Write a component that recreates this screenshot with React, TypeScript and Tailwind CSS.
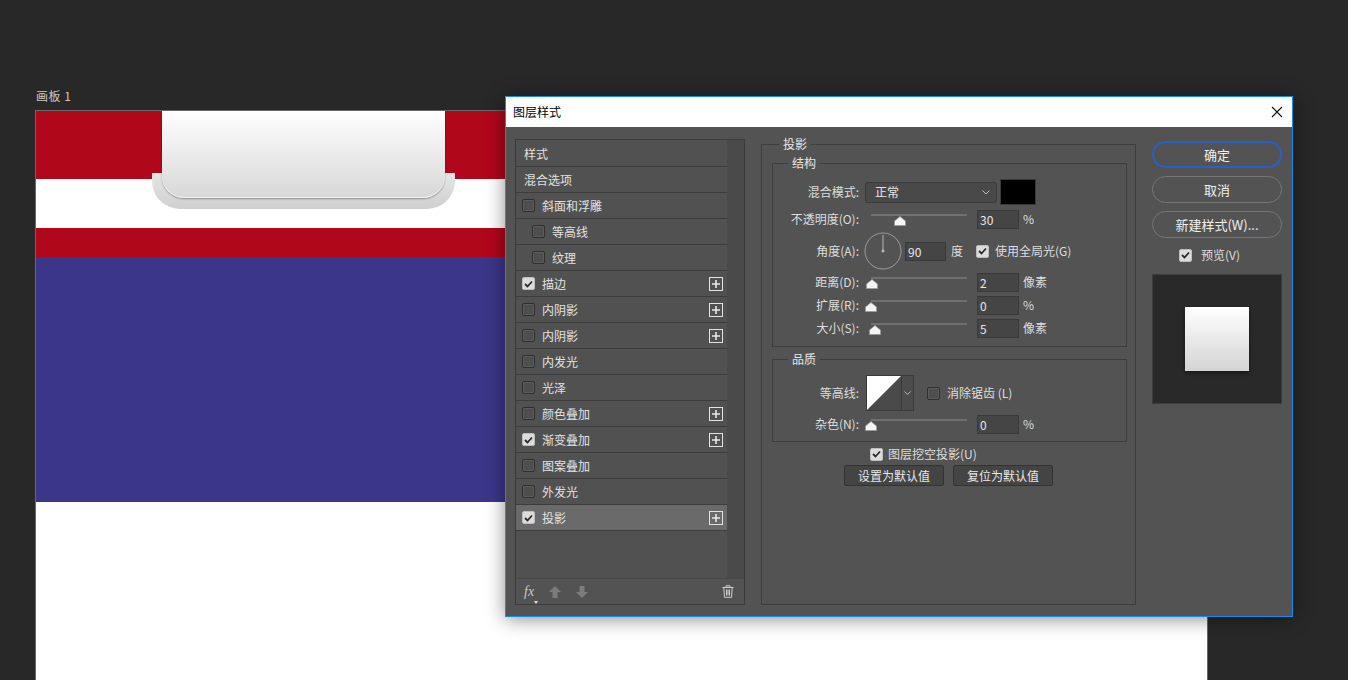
import React from 'react';

type Effect = {
    name: string;
    header?: boolean;
    indent?: boolean;
    checked?: boolean;
    plus?: boolean;
    active?: boolean;
};

const effects: Effect[] = [
    { name: '样式', header: true },
    { name: '混合选项', header: true },
    { name: '斜面和浮雕' },
    { name: '等高线', indent: true },
    { name: '纹理', indent: true },
    { name: '描边', checked: true, plus: true },
    { name: '内阴影', plus: true },
    { name: '内阴影', plus: true },
    { name: '内发光' },
    { name: '光泽' },
    { name: '颜色叠加', plus: true },
    { name: '渐变叠加', checked: true, plus: true },
    { name: '图案叠加' },
    { name: '外发光' },
    { name: '投影', checked: true, plus: true, active: true },
];

function Check({ checked }: { checked?: boolean }) {
    if (checked) {
        return (
            <span className="w-[13px] h-[13px] shrink-0 rounded-[2px] bg-[#dcdcdc] border border-[#bdbdbd] flex items-center justify-center">
                <svg width="9" height="8" viewBox="0 0 9 8">
                    <path d="M1 4 L3.5 6.5 L8 1.5" fill="none" stroke="#2a2a2a" strokeWidth="1.8" />
                </svg>
            </span>
        );
    }
    return <span className="block w-[13px] h-[13px] shrink-0 rounded-[2px] border border-[#2f2f2f] bg-[#4e4e4e] shadow-[inset_0_0_0_1px_#5c5c5c]" />;
}

function PlusBox() {
    return (
        <svg width="14" height="14" viewBox="0 0 14 14" className="shrink-0">
            <rect x="0.5" y="0.5" width="13" height="13" fill="none" stroke="#e2e2e2" />
            <path d="M7 3 V11 M3 7 H11" stroke="#e8e8e8" strokeWidth="1.6" />
        </svg>
    );
}

function Slider({ pct }: { pct: number }) {
    return (
        <div className="relative w-[96px] h-[20px] ml-[12px] shrink-0">
            <div className="absolute left-0 right-0 top-[5px] h-[2px] bg-[#707070]" />
            <svg width="12" height="10" viewBox="0 0 12 10" className="absolute top-[7px]" style={{ left: pct * 95 - 6 }}>
                <path d="M6 0.5 L11.5 5 V9.5 H0.5 V5 Z" fill="#f4f4f4" stroke="#9a9a9a" strokeWidth="0.8" />
            </svg>
        </div>
    );
}

function NumInput({ value, w = 'w-[42px]' }: { value: string; w?: string }) {
    return (
        <div className={`${w} h-[19px] bg-[#454545] border border-[#393939] text-[12px] leading-[17px] pl-[2px] text-[#e4e8f0] shrink-0`}>
            {value}
        </div>
    );
}

function Label({ children }: { children: React.ReactNode }) {
    return <div className="w-[86px] shrink-0 text-right text-[12px] text-[#dedede]">{children}</div>;
}

function SliderRow({ label, pct, value, unit, mt }: { label: string; pct: number; value: string; unit: string; mt: string }) {
    return (
        <div className={`flex items-center h-[20px] ${mt}`}>
            <Label>{label}</Label>
            <Slider pct={pct} />
            <div className="ml-[10px]">
                <NumInput value={value} />
            </div>
            <span className="ml-[4px] text-[12px] text-[#dedede]">{unit}</span>
        </div>
    );
}

function PanelButton({ children, primary }: { children: React.ReactNode; primary?: boolean }) {
    return (
        <button
            className={
                primary
                    ? 'w-[130px] h-[27px] rounded-full border-2 border-[#2561c6] text-[13px] text-[#f0f0f0]'
                    : 'w-[130px] h-[27px] rounded-full border border-[#767676] text-[13px] text-[#f0f0f0]'
            }
        >
            {children}
        </button>
    );
}

export default function App() {
    return (
        <div className="relative w-[1348px] h-[680px] overflow-hidden bg-[#282828] font-['Microsoft_YaHei','Noto_Sans_CJK_SC',sans-serif]">
            {/* Artboard */}
            <div className="pl-[35px] pt-[89px]">
                <div className="h-[21px] pl-[1px] text-[12px] leading-[14px] tracking-[0.5px] text-[#c8c8c8]">画板 1</div>
                <div className="relative w-[1173px] h-[580px] border border-[#6a6a6a] border-b-0 bg-white">
                    <div className="h-[68px] bg-[#b0071b]" />
                    <div className="h-[49px] bg-white" />
                    <div className="h-[29px] bg-[#b0071b]" />
                    <div className="h-[245px] bg-[#3b3688]" />

                    {/* tab */}
                    <div className="absolute left-[116px] top-[62px] w-[303px] h-[36px] rounded-b-[28px] bg-gradient-to-b from-[#e6e6e6] to-[#cfcfcf]" />
                    <div className="absolute left-[126px] top-0 w-[283px] h-[87px] rounded-b-[22px] bg-gradient-to-b from-white to-[#d7d7d7] shadow-[0_1px_2px_rgba(0,0,0,0.35),inset_0_-1px_0_#f2f2f2]" />
                </div>
            </div>

            {/* Layer style dialog */}
            <div className="absolute left-[505px] top-[96px] w-[788px] h-[521px] border border-[#1a8ae8] shadow-[0_2px_18px_rgba(0,0,0,0.45)]">
                <div className="h-[30px] bg-white flex items-center justify-between pl-[7px] pr-[9px]">
                    <span className="text-[12px] text-black">图层样式</span>
                    <svg width="12" height="12" viewBox="0 0 12 12">
                        <path d="M1 1 L11 11 M11 1 L1 11" stroke="#111" strokeWidth="1.1" />
                    </svg>
                </div>

                <div className="h-[489px] bg-[#535353] flex pl-[9px]">
                    {/* effects list */}
                    <div className="mt-[12px] w-[230px] h-[466px] border border-[#3c3c3c] flex flex-col">
                        <div className="flex h-[438px]">
                            <div className="w-[211px] pt-[1px] bg-[#515151]">
                                {effects.map((e, i) => (
                                    <div
                                        key={i}
                                        className={`h-[26px] border-b border-[#3d3d3d] flex items-center pr-[4px] text-[12px] text-[#e2e2e2] ${
                                            e.active ? 'bg-[#6a6a6a]' : ''
                                        } ${e.header ? 'pl-[8px]' : e.indent ? 'pl-[16px]' : 'pl-[6px]'}`}
                                    >
                                        {!e.header && <Check checked={e.checked} />}
                                        <span className={e.header ? '' : 'ml-[7px]'}>{e.name}</span>
                                        <span className="flex-1" />
                                        {e.plus && <PlusBox />}
                                    </div>
                                ))}
                            </div>
                            <div className="w-[17px] bg-[#4a4a4a]" />
                        </div>
                        <div className="flex-1 border-t border-[#484848] flex items-center pl-[8px] pr-[10px]">
                            <span className="relative font-['Liberation_Serif',serif] italic text-[14px] leading-none text-[#c8c8c8]">
                                fx
                                <svg width="4" height="3" viewBox="0 0 4 3" className="absolute -right-[4px] bottom-[-5px]">
                                    <path d="M0 0 H4 L2 3 Z" fill="#e0e0e0" />
                                </svg>
                            </span>
                            <svg width="12" height="12" viewBox="0 0 12 12" className="ml-[15px]">
                                <path d="M6 0 L12 6 H8.5 V12 H3.5 V6 H0 Z" fill="#7c7c7c" />
                            </svg>
                            <svg width="12" height="12" viewBox="0 0 12 12" className="ml-[15px]">
                                <path d="M6 12 L12 6 H8.5 V0 H3.5 V6 H0 Z" fill="#7c7c7c" />
                            </svg>
                            <span className="flex-1" />
                            <svg width="12" height="13" viewBox="0 0 12 13">
                                <path d="M0.5 2.5 H11.5 M4 2.5 V0.8 H8 V2.5 M1.8 2.5 L2.5 12.3 H9.5 L10.2 2.5 M4.5 4.5 V10.5 M6 4.5 V10.5 M7.5 4.5 V10.5" fill="none" stroke="#cfcfcf" strokeWidth="1" />
                            </svg>
                        </div>
                    </div>

                    {/* settings */}
                    <div className="ml-[16px] w-[375px] pt-[9px]">
                        <fieldset className="h-[469px] border border-[#3e3e3e]">
                            <legend className="ml-[17px] px-[4px] text-[12px] leading-[16px] text-[#e6e6e6]">投影</legend>

                            <fieldset className="mt-[3px] ml-[10px] w-[355px] border border-[#3e3e3e] pb-[8px]">
                                <legend className="ml-[15px] px-[4px] text-[12px] leading-[16px] text-[#e6e6e6]">结构</legend>

                                <div className="flex items-center h-[26px] mt-[8px]">
                                    <Label>混合模式:</Label>
                                    <div className="ml-[6px] w-[132px] h-[21px] rounded-[3px] bg-[#494949] border border-[#3a3a3a] flex items-center justify-between pl-[9px] pr-[6px]">
                                        <span className="text-[12px] text-[#e6e6e6]">正常</span>
                                        <svg width="8" height="5" viewBox="0 0 8 5">
                                            <path d="M0.5 0.5 L4 4 L7.5 0.5" fill="none" stroke="#bdbdbd" strokeWidth="1" />
                                        </svg>
                                    </div>
                                    <div className="ml-[3px] w-[36px] h-[26px] bg-black border border-[#3a3a3a]" />
                                </div>

                                <SliderRow label="不透明度(O):" pct={0.3} value="30" unit="%" mt="mt-[4px]" />

                                <div className="flex items-center h-[38px] mt-[3px]">
                                    <Label>角度(A):</Label>
                                    <svg width="38" height="38" viewBox="0 0 38 38" className="ml-[5px] shrink-0">
                                        <circle cx="19" cy="19" r="18" fill="none" stroke="#9c9c9c" strokeWidth="1" />
                                        <path d="M19 19 V3" stroke="#b8b8b8" strokeWidth="1" />
                                        <circle cx="19" cy="19" r="1.5" fill="#b8b8b8" />
                                    </svg>
                                    <div className="ml-[3px]">
                                        <NumInput value="90" w="w-[41px]" />
                                    </div>
                                    <span className="ml-[5px] text-[12px] text-[#dedede]">度</span>
                                    <span className="ml-[13px]">
                                        <Check checked />
                                    </span>
                                    <span className="ml-[6px] text-[12px] text-[#dedede]">使用全局光(G)</span>
                                </div>

                                <SliderRow label="距离(D):" pct={0.01} value="2" unit="像素" mt="mt-[2px]" />
                                <SliderRow label="扩展(R):" pct={0} value="0" unit="%" mt="mt-[3px]" />
                                <SliderRow label="大小(S):" pct={0.04} value="5" unit="像素" mt="mt-[3px]" />
                            </fieldset>

                            <fieldset className="mt-[4px] ml-[10px] w-[355px] border border-[#3e3e3e] pb-[7px]">
                                <legend className="ml-[15px] px-[4px] text-[12px] leading-[16px] text-[#e6e6e6]">品质</legend>

                                <div className="flex items-center h-[36px] mt-[8px]">
                                    <Label>等高线:</Label>
                                    <div className="ml-[7px] h-[36px] flex border border-[#3a3a3a] shrink-0">
                                        <svg width="34" height="34" viewBox="0 0 34 34">
                                            <rect width="34" height="34" fill="#4a4a4a" />
                                            <path d="M0 0 H34 L0 34 Z" fill="#ffffff" />
                                        </svg>
                                        <div className="w-[12px] border-l border-[#3a3a3a] bg-[#4c4c4c] flex items-center justify-center">
                                            <svg width="7" height="4" viewBox="0 0 7 4">
                                                <path d="M0.5 0.5 L3.5 3.5 L6.5 0.5" fill="none" stroke="#bdbdbd" strokeWidth="1" />
                                            </svg>
                                        </div>
                                    </div>
                                    <span className="ml-[13px]">
                                        <Check />
                                    </span>
                                    <span className="ml-[7px] text-[12px] text-[#dedede]">消除锯齿 (L)</span>
                                </div>

                                <SliderRow label="杂色(N):" pct={0} value="0" unit="%" mt="mt-[3px]" />
                            </fieldset>

                            <div className="flex items-center h-[14px] mt-[5px] pl-[108px]">
                                <Check checked />
                                <span className="ml-[5px] text-[12px] text-[#dedede]">图层挖空投影(U)</span>
                            </div>

                            <div className="flex justify-center gap-[9px] mt-[4px]">
                                <button className="w-[100px] h-[21px] rounded-[2px] bg-[#444444] border border-[#333333] text-[12px] text-[#e8e8e8]">设置为默认值</button>
                                <button className="w-[100px] h-[21px] rounded-[2px] bg-[#444444] border border-[#333333] text-[12px] text-[#e8e8e8]">复位为默认值</button>
                            </div>
                        </fieldset>
                    </div>

                    {/* actions */}
                    <div className="ml-[16px] w-[130px] pt-[14px] flex flex-col gap-[8px]">
                        <PanelButton primary>确定</PanelButton>
                        <PanelButton>取消</PanelButton>
                        <PanelButton>新建样式(W)...</PanelButton>
                        <div className="flex items-center h-[14px] mt-[2px] pl-[27px]">
                            <Check checked />
                            <span className="ml-[9px] text-[12px] text-[#dedede]">预览(V)</span>
                        </div>
                        <div className="mt-[4px] w-[130px] h-[130px] bg-[#292929] border border-[#3c3c3c] flex items-center justify-center">
                            <div className="w-[64px] h-[64px] bg-gradient-to-b from-white to-[#d4d4d4] shadow-[0_2px_4px_rgba(0,0,0,0.45)]" />
                        </div>
                    </div>
                </div>
            </div>
        </div>
    );
}
